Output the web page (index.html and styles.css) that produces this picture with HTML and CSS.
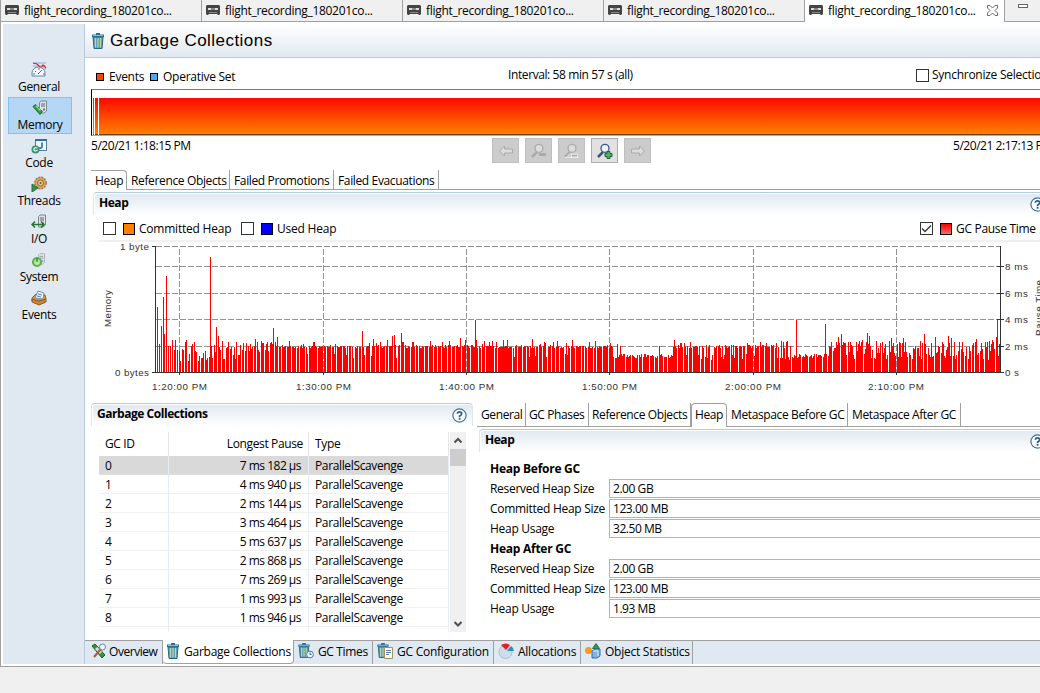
FILE: index.html
```html
<!DOCTYPE html>
<html lang="en">
<head>
<meta charset="utf-8">
<title>Garbage Collections</title>
<link rel="stylesheet" href="styles.css">
</head>
<body>
<svg class="defs" width="0" height="0">
  <defs>
    <symbol id="tape" viewBox="0 0 14 10"><path d="M1 0h12l1 1v8l-1 1h-1l-1-1H3l-1 1H1L0 9V1z" fill="#444"/><path d="M2 3h3v2H2zM9 3h3v2H9z" fill="#ddd"/><path d="M5 3h4v2H5zM3 7h8v1H3z" fill="#888"/></symbol>
    <symbol id="trash" viewBox="0 0 12 16"><path d="M1 4h10l-1 11.5H2z" fill="#5b9dad" stroke="#286981"/><path d="M3.500 5v9.500M6 5v9.500M8.500 5v9.500" stroke="#b9d9b4" stroke-width="1.200"/><path d="M0 1.500h12v2.500H0zM4 0h4v2H4z" fill="#2b6f96"/><path d="M1 2.500h10" stroke="#8fbfd0" stroke-width="1"/></symbol>
    <symbol id="help" viewBox="0 0 15 15"><circle cx="7.5" cy="7.5" r="6.600" fill="#fff" stroke="#3e739f" stroke-width="1.200"/><path d="M5.400 5.800Q5.400 3.800 7.500 3.800T9.700 5.800Q9.700 6.900 7.600 8V9.200M7.600 10v1.700" fill="none" stroke="#285f91" stroke-width="1.800"/></symbol>
    <symbol id="glass" viewBox="0 0 16 16"><path d="M6 9L1 14" stroke="currentColor" stroke-width="2.500"/><circle cx="8" cy="5.300" r="4" fill="var(--lens)" stroke="currentColor" stroke-width="1.300"/></symbol>
    <symbol id="server" viewBox="0 0 8 13"><path d="M2 .5h5.500v10L5 12.500H.5V2z" fill="#dfe3e6" stroke="#7e858c"/><path d="M2 3.500h4M2 5.500h4" stroke="#59636d"/><path d="M4 8h2v2H4z" fill="#68717c"/></symbol>
  </defs>
</svg>
<div class="app">
  <div class="editor-tabs">
    <div class="etab"><svg><use href="#tape"/></svg><span>flight_recording_180201co...</span></div>
    <div class="etab"><svg><use href="#tape"/></svg><span>flight_recording_180201co...</span></div>
    <div class="etab"><svg><use href="#tape"/></svg><span>flight_recording_180201co...</span></div>
    <div class="etab"><svg><use href="#tape"/></svg><span>flight_recording_180201co...</span></div>
    <div class="etab current"><svg><use href="#tape"/></svg><span>flight_recording_180201co...</span><svg class="close" viewBox="0 0 11 11"><path d="M.5 .5h2.500l2.500 2.500L8 .5h2.500V3L8 5.500 10.500 8v2.500H8L5.500 8 3 10.500H.5V8L3 5.500.5 3z" fill="#fff" stroke="#6a6a6a"/></svg></div>
    <div class="etools"><i></i></div>
  </div>
  <div class="workspace">
    <nav class="sidebar">
      <a><svg viewBox="0 0 16 16"><path d="M2 1h13M2 4h13M8 7h7" stroke="#8badd5"/><path d="M2 1l4 1 4 4 2-3 3 3" fill="none" stroke="#e21f2d" stroke-width="1.200"/><path d="M1 14V11a6.500 6 0 0 1 13 0v3z" fill="#f5f9fc" stroke="#6c87aa"/><path d="M7 12l4-4M4 9l1 1M8 6v2M2 12h2M12 12h2" stroke="#536d91"/></svg>General</a>
      <a class="selected"><svg viewBox="0 0 16 16"><use href="#server" x="7" y="0" width="8" height="14"/><path d="M1 6.500L3.500 4.500l7 7L8 14.500z" fill="#369843" stroke="#236a32"/><path d="M4 6l2 2M6.500 8.500l2 2" stroke="#a9e0a0" stroke-width="1.500"/></svg>Memory</a>
      <a><svg viewBox="0 0 16 16"><path d="M4.500 1.500h11v11h-11z" fill="#eff7fd" stroke="#55789e"/><path d="M4 1h12v2H4z" fill="#326da9"/><path d="M11 4.500v4q0 2-3 1.500" fill="none" stroke="#357db9" stroke-width="1.800"/><circle cx="4.500" cy="11.500" r="4" fill="#37966a"/><path d="M6.500 10q-4-1-3.500 2 1 2 3.500 0" fill="none" stroke="#fff" stroke-width="1.200"/></svg>Code</a>
      <a><svg viewBox="0 0 16 16"><circle cx="9.500" cy="7" r="5.700" fill="#d8a665" stroke="#a97545" stroke-width="1.500" stroke-dasharray="2 1"/><circle cx="9.500" cy="7" r="3" fill="#e9c789" stroke="#92683f"/><circle cx="9.500" cy="7" r="1" fill="#735037"/><path d="M1 8l6 4-6 4z" fill="#329255" stroke="#227340"/></svg>Threads</a>
      <a><svg viewBox="0 0 16 16"><use href="#server" x="7" y="0" width="8" height="14"/><path d="M1 10.500h12M4 7.500l-3 3 3 3M10 7.500l3 3-3 3" fill="none" stroke="#24752d" stroke-width="1.500"/></svg>I/O</a>
      <a><svg viewBox="0 0 16 16"><use href="#server" x="7" y="1" width="7" height="12" opacity=".6"/><circle cx="6" cy="10" r="4" fill="#bce9ae" stroke="#59b747" stroke-width="2.200"/><path d="M6 6v4" stroke="#368e32" stroke-width="1.500"/></svg>System</a>
      <a><svg viewBox="0 0 16 16"><path d="M1 8l4-4 9 1 1 4-6 5-8-3z" fill="#d69747" stroke="#8e5c2a"/><path d="M4 8l3-7 6 2-1 6z" fill="#e9f3fb" stroke="#7890ae"/><path d="M7 4l4 1M6 6l4 1" stroke="#5e82b1"/><path d="M1 9l7 2 7-2v3l-7 3-7-3z" fill="#c98535" stroke="#8c5b2c"/></svg>Events</a>
    </nav>
    <main class="page">
      <header class="page-title"><svg><use href="#trash"/></svg><h1>Garbage Collections</h1></header>
      <div class="page-body">
        <div class="range-legend"><i class="swatch fire"></i><span class="ev">Events</span><i class="swatch sky"></i><span class="os">Operative Set</span><span class="interval">Interval: 58 min 57 s (all)</span><i class="check"></i><span>Synchronize Selection</span></div>
        <div class="range"><i class="sliver"></i><i class="sliver wide"></i><i class="fill"></i></div>
        <div class="range-foot">
          <span class="start">5/20/21 1:18:15 PM</span>
          <div class="buttons">
            <b><svg viewBox="0 0 16 16"><path d="M1.500 8l5-5v3h8v4h-8v3z" fill="#ddd" stroke="#aaa"/></svg></b>
            <b><svg viewBox="0 0 16 16"><use href="#glass"/><path d="M8.500 10.500h6v2h-6z" fill="#aaa" stroke="#aaa"/></svg></b>
            <b><svg viewBox="0 0 16 16"><use href="#glass"/><path d="M2 14.500l4-4M7.500 14v-3h6v3M1 14.500h14" fill="none" stroke="#e8e8e8"/><path d="M8 12h5v1H8z" fill="#aaa"/></svg></b>
            <b class="enabled"><svg viewBox="0 0 16 16"><use href="#glass"/><path d="M10 8.500h3v2h2v3h-2v2h-3v-2H8v-3h2z" fill="#57aa67" stroke="#176a31"/></svg></b>
            <b><svg viewBox="0 0 16 16"><path d="M14.500 8l-5-5v3h-8v4h8v3z" fill="#ddd" stroke="#aaa"/></svg></b>
          </div>
          <span class="end">5/20/21 2:17:13 PM</span>
        </div>
        <div class="tabs top-tabs"><span class="on t1">Heap</span><span class="t2">Reference Objects</span><span class="t3">Failed Promotions</span><span class="t4">Failed Evacuations</span></div>
        <section class="heap-chart">
          <h2><span>Heap</span><svg><use href="#help"/></svg></h2>
          <div class="series"><i class="check"></i><i class="swatch orange"></i><span class="s1">Committed Heap</span><i class="check"></i><i class="swatch blue"></i><span class="s2">Used Heap</span><i class="check right"><svg viewBox="0 0 11 11"><path d="M1 5.500l3 3 6-6" fill="none" stroke="#333" stroke-width="1.300"/></svg></i><i class="swatch red"></i><span class="s3">GC Pause Time</span></div>
          <svg class="chart" viewBox="99 242 941 158">
            <g id="grid" stroke="#929292" stroke-width="1" stroke-dasharray="6 2"></g>
            <path id="bars" fill="#f00" shape-rendering="crispEdges"></path>
            <path d="M155.500 246v127M152 246.500h4M152 372.500h852M1000.500 246v127M997 266.500h7M997 293.500h7M997 319.500h7M997 346.500h7M179.500 372v3M323.500 372v3M466.500 372v3M609.500 372v3M753.500 372v3M896.500 372v3" fill="none" stroke="#333"/>
            <g class="axis">
              <text x="120" y="250" textLength="29">1 byte</text><text x="115" y="376" textLength="34">0 bytes</text>
              <text x="152" y="390" textLength="55">1:20:00 PM</text><text x="296" y="390" textLength="55">1:30:00 PM</text><text x="439" y="390" textLength="55">1:40:00 PM</text><text x="582" y="390" textLength="55">1:50:00 PM</text><text x="725" y="390" textLength="56">2:00:00 PM</text><text x="868" y="390" textLength="56">2:10:00 PM</text>
              <text x="1005" y="270" textLength="23">8 ms</text><text x="1005" y="297" textLength="23">6 ms</text><text x="1005" y="323" textLength="23">4 ms</text><text x="1005" y="350" textLength="23">2 ms</text><text x="1005" y="376" textLength="14">0 s</text>
              <text transform="translate(111 327) rotate(-90)" textLength="37">Memory</text><text transform="translate(1042 336) rotate(-90)" textLength="56">Pause Time</text>
            </g>
          </svg>
        </section>
        <div class="lower">
          <section class="gcs">
            <h2><span>Garbage Collections</span><svg><use href="#help"/></svg></h2>
            <div class="table-wrap">
              <div class="table">
                <div class="tr th"><span>GC ID</span><span>Longest Pause</span><span>Type</span></div>
                <div class="tr sel"><span>0</span><span>7 ms 182 µs</span><span>ParallelScavenge</span></div>
                <div class="tr"><span>1</span><span>4 ms 940 µs</span><span>ParallelScavenge</span></div>
                <div class="tr"><span>2</span><span>2 ms 144 µs</span><span>ParallelScavenge</span></div>
                <div class="tr"><span>3</span><span>3 ms 464 µs</span><span>ParallelScavenge</span></div>
                <div class="tr"><span>4</span><span>5 ms 637 µs</span><span>ParallelScavenge</span></div>
                <div class="tr"><span>5</span><span>2 ms 868 µs</span><span>ParallelScavenge</span></div>
                <div class="tr"><span>6</span><span>7 ms 269 µs</span><span>ParallelScavenge</span></div>
                <div class="tr"><span>7</span><span>1 ms 993 µs</span><span>ParallelScavenge</span></div>
                <div class="tr"><span>8</span><span>1 ms 946 µs</span><span>ParallelScavenge</span></div>
                <div class="tr rest"><span></span><span></span><span></span></div>
              </div>
              <div class="scroll"><svg viewBox="0 0 16 17"><path d="M4.500 10.500L8 7l3.500 3.500" fill="none" stroke="#505050" stroke-width="2"/></svg><i></i><svg class="down" viewBox="0 0 16 17"><path d="M4.500 7L8 10.500 11.500 7" fill="none" stroke="#505050" stroke-width="2"/></svg></div>
            </div>
          </section>
          <div class="details">
            <div class="tabs"><span class="d1">General</span><span class="d2">GC Phases</span><span class="d3">Reference Objects</span><span class="on d4">Heap</span><span class="d5">Metaspace Before GC</span><span class="d6">Metaspace After GC</span></div>
            <section>
              <h2><span>Heap</span><svg><use href="#help"/></svg></h2>
              <div class="form">
                <h3>Heap Before GC</h3>
                <label>Reserved Heap Size</label><output>2.00 GB</output>
                <label>Committed Heap Size</label><output>123.00 MB</output>
                <label>Heap Usage</label><output>32.50 MB</output>
                <h3>Heap After GC</h3>
                <label>Reserved Heap Size</label><output>2.00 GB</output>
                <label>Committed Heap Size</label><output>123.00 MB</output>
                <label>Heap Usage</label><output>1.93 MB</output>
              </div>
            </section>
          </div>
        </div>
      </div>
      <footer class="page-tabs">
        <span class="p1"><svg viewBox="0 0 16 16"><path d="M1 3l3-2 10 11-3 3z" fill="#309342" stroke="#1c6429"/><path d="M5 5l5 5" stroke="#ddd" stroke-width="3"/><path d="M10 6l-7 8" stroke="#a2623b" stroke-width="2"/><circle cx="11.500" cy="4" r="3" fill="#eef5fb" stroke="#73879b"/></svg>Overview</span>
        <span class="p2 on"><svg class="bin"><use href="#trash"/></svg>Garbage Collections</span>
        <span class="p3"><svg viewBox="0 0 16 16"><use href="#trash" width="12" height="15"/><circle cx="12" cy="11.500" r="3.400" fill="#f2f8fe" stroke="#4679a6"/><path d="M12 9.500v2h1.500" fill="none" stroke="#325f91"/></svg>GC Times</span>
        <span class="p4"><svg viewBox="0 0 16 16"><use href="#trash" width="12" height="15"/><path d="M7.500 4.500h8v11h-8z" fill="#fffbea" stroke="#a1926d"/><path d="M9 7.500h5M9 9.500h5M9 11.500h3" stroke="#5c83b2"/></svg>GC Configuration</span>
        <span class="p5"><svg viewBox="0 0 16 16"><circle cx="7.500" cy="9" r="6.500" fill="#cadeee" stroke="#a5bfd6"/><path d="M8 7L3 2q5-3 9 0z" fill="#e71d2c"/><path d="M9 8l4-5q3 2 3 5z" fill="#2b93a7"/></svg>Allocations</span>
        <span class="p6"><svg viewBox="0 0 16 16"><circle cx="3.500" cy="7.500" r="3.500" fill="#f49b20"/><path d="M11 .5l3.500 5h-7z" fill="#319942" stroke="#28723a"/><path d="M7 8l3-2h5v7l-3 2H7z" fill="#7fb3e7" stroke="#386fa8"/><path d="M8 8h5v5" fill="none" stroke="#d8edff"/></svg>Object Statistics</span>
      </footer>
    </main>
  </div>
</div>
<script src="chart.js"></script>
</body>
</html>
```

FILE: styles.css
```css
* { box-sizing: border-box; }
body { margin: 0; width: 1040px; height: 693px; overflow: hidden; background: #f0f0f0; color: #000; font: 12px/16px "Open Sans", "Noto Sans", sans-serif; letter-spacing: -.36px; white-space: nowrap; }
h1, h2, h3 { margin: 0; }
.defs { display: block; height: 0; }
.app { height: 667px; overflow: hidden; border-left: 1px solid #a0a0a0; border-bottom: 1px solid #a0a0a0; background: #fff; display: flex; flex-direction: column; }
.editor-tabs { display: flex; height: 22px; margin-left: -1px; flex: none; letter-spacing: -.3px; }
.etab { width: 201px; display: flex; align-items: flex-start; background: #f0f0f0; border-right: 1px solid #a0a0a0; border-bottom: 1px solid #a0a0a0; padding: 3px 0 0 4px; flex: none; }
.etab svg { width: 14px; height: 10px; margin: 2px 5px 0 0; flex: none; }
.etab:nth-child(1) { width: 202px; padding-left: 5px; }
.etab.current { background: #fff; border-bottom: 0; width: 200px; }
.etab .close { width: 11px; height: 11px; margin: 2px 0 0 11px; }
.etools { flex: 1; background: #f0f0f0; border-bottom: 1px solid #a0a0a0; padding: 4px 0 0 13px; }
.etools i { display: block; width: 10px; height: 4px; border: 1px solid #666; background: #fff; }
.workspace { display: flex; padding: 2px 0 2px 2px; height: 644px; }
.sidebar { width: 82px; flex: none; background: #e0e8f1; border-right: 1px solid #b5cbe0; padding: 35px 0 0 5px; letter-spacing: -.3px; }
.sidebar a { display: flex; flex-direction: column; align-items: center; width: 64px; height: 38px; padding-top: 3px; line-height: 17px; padding-right: 2px; }
.sidebar a.selected { background: #b3d7f4; border: 1px solid #86bff0; padding: 2px 0 0; height: 37px; margin-bottom: 1px; }
.sidebar svg { width: 16px; height: 16px; flex: none; }
.page { flex: 1; min-width: 0; display: flex; flex-direction: column; }
.page-title { height: 34px; flex: none; display: flex; align-items: center; padding: 0 0 0 7px; background: linear-gradient(#fff, #e1e8f1); border-bottom: 1px solid #b5cbe0; }
.page-title svg { width: 12px; height: 16px; margin-right: 6px; }
h1 { font: 17px/22px "Liberation Sans", sans-serif; letter-spacing: .45px; }
.page-body { height: 582px; flex: none; padding-left: 6px; overflow: hidden; display: flex; flex-direction: column; }
.range-legend { height: 31px; display: flex; align-items: center; padding: 6px 0 0 5px; flex: none; letter-spacing: -.26px; }
.range-legend > *, .series > *, .range-foot > * { flex: none; }
.swatch { width: 12px; height: 12px; border: 1px solid #000; }
.range-legend .swatch { width: 8px; height: 8px; margin-right: 5px; }
.fire { background: #f40; }
.sky { background: #45aaf0; }
.orange { background: #ff8000; }
.blue { background: #00f; }
.red { background: linear-gradient(#f00, #ff6a6a); }
.ev { width: 41px; }
.os { width: 345px; }
.interval { width: 408px; margin-top: -3px; letter-spacing: -.4px; }
.check { display: block; width: 13px; height: 13px; border: 1px solid #333; background: #fff; }
.check svg { display: block; width: 11px; height: 11px; }
.range-legend .check { margin: -3px 3px 0 0; }
.range-legend .check + span { margin-top: -3px; }
.range { height: 47px; flex: none; border-top: 1px solid #75757d; border-bottom: 1px solid #aaa; border-left: 1px solid #000; padding: 8px 0 0; display: flex; }
.range i { background: linear-gradient(#ff0800, #ff8000); border-bottom: 1px solid #704010; flex: none; }
.range .sliver { width: 1px; margin: 0 1px; }
.range .wide { width: 3px; margin-left: 0; }
.range .fill { flex: 1; }
.range-foot { height: 34px; flex: none; display: flex; padding-top: 2px; letter-spacing: -.46px; }
.start { width: 401px; }
.buttons { display: flex; gap: 6px; width: 461px; }
.buttons b { width: 27px; height: 25px; background: #ccc; border: 1px solid #bfbfbf; display: grid; place-items: center; color: #aaa; --lens: #ddd; }
.buttons svg { width: 16px; height: 16px; }
.buttons .enabled { background: #e1e1e1; border-color: #adadad; color: #3d5679; --lens: #eef5fa; }
.tabs { display: flex; flex: none; border-bottom: 1px solid #a0a0a0; }
.tabs span { border-right: 1px solid #a0a0a0; padding: 4px 0 0 4px; flex: none; }
.top-tabs { height: 20px; }
.top-tabs span { padding-top: 3px; }
.tabs .on { height: calc(100% + 1px); background: #fff; border-top: 1px solid #a0a0a0; border-top-right-radius: 4px; padding-top: 2px; }
.t1 { width: 36px; }
.t2 { width: 103px; }
.t3 { width: 104px; }
.t4 { width: 105px; }
section h2 { height: 23px; display: flex; font-size: 12px; line-height: 20px; padding-left: 5px; letter-spacing: -.45px; border-top: 1px solid #b5cbe0; border-left: 1px solid #dce7f1; border-top-left-radius: 4px; background: linear-gradient(#e0e8f1, #fff); box-shadow: inset 1px 1px #fff; }
h2 svg { width: 15px; height: 15px; margin: 4px 0 0 auto; flex: none; }
.heap-chart { height: 208px; margin: 2px 0 0 2px; flex: none; }
.heap-chart h2 svg { margin-right: -5px; }
.series { height: 27px; display: flex; align-items: center; margin-left: 6px; padding: 2px 0 0 4px; border-bottom: 2px solid #f0f0f0; letter-spacing: -.22px; }
.series .check { margin-right: 7px; }
.series .swatch { margin-right: 4px; }
.s1 { width: 102px; }
.s2 { width: 643px; }
.s3 { letter-spacing: -.3px; }
.chart { display: block; width: 941px; height: 158px; margin-left: 6px; overflow: visible; }
.axis { font: 9.8px "Liberation Sans", sans-serif; fill: #333; letter-spacing: 0; }
.lower { display: flex; height: 237px; margin-top: 3px; }
.gcs { width: 382px; flex: none; }
.gcs h2 { border-right: 1px solid #dce7f1; border-top-right-radius: 4px; padding-right: 5px; }
.table-wrap { display: flex; margin: 6px 0 0 8px; height: 200px; gap: 1px; }
.table { width: 350px; overflow: hidden; }
.tr { display: grid; grid-template-columns: 70px 140px 140px; height: 19px; }
.tr span { border-right: 1px solid #e6edf8; border-bottom: 1px solid #f0f0f0; padding: 2px 6px 0; line-height: 16px; }
.tr span:nth-child(2) { text-align: right; padding-right: 7px; letter-spacing: -.5px; }
.th { height: 24px; }
.th span { border-bottom: 0; border-color: #e5e5e5; padding-top: 4px; }
.tr.th span:nth-child(2) { padding-right: 5px; letter-spacing: -.36px; }
.sel span { background: #d9d9d9; border-bottom-color: #e0e0e0; }
.scroll { width: 16px; background: #f0f0f0; display: flex; flex-direction: column; }
.scroll svg { width: 16px; height: 17px; }
.scroll i { height: 17px; background: #cdcdcd; }
.scroll .down { margin-top: auto; }
.details { flex: 1; min-width: 0; margin-left: 4px; }
.details .tabs { height: 24px; letter-spacing: -.38px; }
.details .on { border-left: 1px solid #a0a0a0; border-top-left-radius: 4px; padding-top: 3px; }
.d1 { width: 49px; }
.d2 { width: 63px; }
.d3 { width: 102px; }
.d4 { width: 36px; }
.d5 { width: 121px; }
.d6 { width: 113px; }
.details .tabs .d2, .details .tabs .d3, .details .tabs .d4 { padding-left: 3px; }
.details section { margin: 2px 0 0 2px; }
.details h2 svg { margin-right: -5px; }
.form { display: grid; grid-template-columns: 119px 1fr; grid-auto-rows: 20px; margin: 7px 0 0 11px; line-height: 20px; letter-spacing: -.29px; }
.form h3 { grid-column: 1 / 3; font-size: 12px; letter-spacing: -.25px; }
.form output { height: 19px; border: 1px solid #abb3bd; border-right: 0; padding-left: 3px; line-height: 18px; letter-spacing: -.45px; }
.page-tabs { height: 24px; flex: none; display: flex; background: #e0e8f1; border-top: 1px solid #a0a0a0; letter-spacing: -.25px; }
.page-tabs span { display: flex; border-right: 1px solid #a0a0a0; padding: 3px 0 0 6px; flex: none; }
.page-tabs svg { width: 16px; height: 16px; margin: -1px 4px 0 0; flex: none; }
.page-tabs .bin { width: 12px; margin-right: 5px; }
.page-tabs .on { background: #fff; margin-top: -1px; padding: 4px 0 0 4px; border-bottom: 1px solid #a0a0a0; border-radius: 0 0 4px 4px; }
.p1 { width: 78px; letter-spacing: -.45px; }
.p1 svg { margin-right: 2px; }
.p2 { width: 131px; }
.p3 { width: 79px; }
.p4 { width: 121px; }
.p5 { width: 87px; }
.p6 { width: 112px; }
.page-tabs .p1 svg { margin-right: 2px; }
.page-tabs .p3, .page-tabs .p4, .page-tabs .p5, .page-tabs .p6 { padding-left: 4px; }
.page-tabs .p3 { letter-spacing: -.35px; }
```

FILE: chart.js
```js
var grid = "";
[246.5, 266.5, 293.5, 319.5, 346.5].forEach(function (y) { grid += '<path d="M156 ' + y + 'H1000"/>'; });
[179.5, 323.5, 466.5, 609.5, 753.5, 896.5].forEach(function (x) { grid += '<path d="M' + x + ' 249V372"/>'; });
document.getElementById("grid").innerHTML = grid;

// Pause heights in pixels above the time axis, keyed by x.
var pauses = {157:65,159:28,161:46,163:75,164:38,166:96,168:26,170:26,172:32,174:22,175:32,177:22,179:21,180:11,182:23,183:22,185:30,186:32,188:11,189:18,191:26,192:28,194:30,195:21,196:20,198:11,199:16,201:14,202:14,203:19,205:21,206:12,207:14,209:15,210:115,211:26,212:14,214:27,215:20,216:45,218:36,219:25,220:22,222:31,223:13,224:13,226:24,227:25,228:30,230:23,231:25,233:17,234:25,235:13,236:30,238:17,239:17,240:27};
var peaks = {255:33,273:44,277:35,289:31,313:30,362:41,373:33,387:32,392:36,394:37,401:39,412:30,442:30,460:34,465:32,475:52,476:32,482:28,489:30,492:31,503:32,507:32,532:33,544:30,557:31,572:32,589:30,595:31,610:29,617:28,620:26,659:26,674:32,699:26,725:27,733:27,760:30,787:31,796:52,825:48,831:30,838:35,841:38,856:30,862:32,867:39,869:36,876:31,891:34,903:34,924:38,935:35,948:36,951:34,976:33,989:31,992:32,996:35,997:53};
var seed = 71;
function rnd() { seed = (seed * 16807) % 2147483647; return seed / 2147483647; }
var x = 242;
while (x < 1000) {
  var run = 2 + Math.floor(rnd() * (x > 610 ? 6 : 4));
  var spread = x < 275 || x > 828;
  for (var i = 0; i < run && x < 1000; i++, x++) {
    var low = (x > 612 && x < 673) || (x > 790 && x < 828);
    var h = low ? 14 + rnd() * 4 : spread ? 18 + rnd() * 13 : 24 + rnd() * 3;
    if (!low && rnd() < (x > 680 ? .27 : .08)) h = 12 + rnd() * 6;
    if (!low && rnd() < .09) h = 28 + rnd() * 3;
    pauses[x] = Math.round(h);
  }
  x++;
}
for (var p in peaks) pauses[p] = peaks[p];
var d = "";
for (var k in pauses) d += "M" + k + " 372v-" + pauses[k] + "h1v" + pauses[k] + "z";
document.getElementById("bars").setAttribute("d", d);
```
